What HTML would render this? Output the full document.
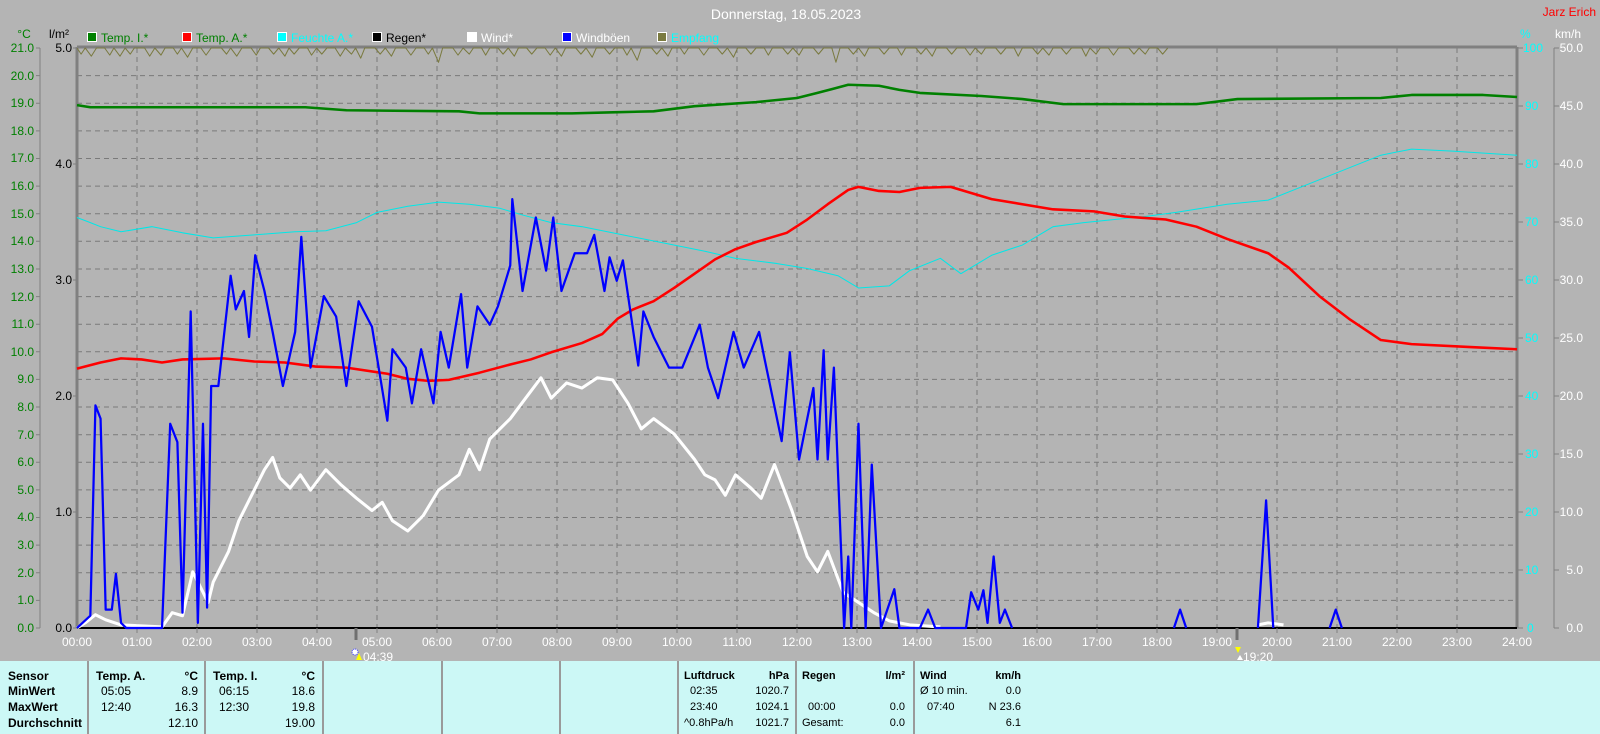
<!DOCTYPE html>
<html><head><meta charset="utf-8"><style>
html,body{margin:0;padding:0;width:1600px;height:734px;overflow:hidden;background:#b4b4b4;font-family:"Liberation Sans",sans-serif}
svg{position:absolute;left:0;top:0}
#tbl{position:absolute;left:0;top:661px;width:1600px;height:73px;background:#ccf8f6;font-size:12px;color:#000}
.sep{position:absolute;top:0;width:2px;height:73px;background:#9a9a9a}
.t{position:absolute;white-space:nowrap;line-height:12px}
.b{font-weight:bold}
.r{text-align:right}
</style></head><body>
<svg width="1600" height="734" xmlns="http://www.w3.org/2000/svg" font-family="Liberation Sans, sans-serif" font-size="12">
<path stroke="#7a7a7a" stroke-width="1" stroke-dasharray="5,4" fill="none" d="M77 75.6H1517M77 103.2H1517M77 130.9H1517M77 158.5H1517M77 186.1H1517M77 213.7H1517M77 241.3H1517M77 269H1517M77 296.6H1517M77 324.2H1517M77 351.8H1517M77 379.4H1517M77 407H1517M77 434.7H1517M77 462.3H1517M77 489.9H1517M77 517.5H1517M77 545.1H1517M77 572.8H1517M77 600.4H1517
M137 48V628M197 48V628M257 48V628M317 48V628M377 48V628M437 48V628M497 48V628M557 48V628M617 48V628M677 48V628M737 48V628M797 48V628M857 48V628M917 48V628M977 48V628M1037 48V628M1097 48V628M1157 48V628M1217 48V628M1277 48V628M1337 48V628M1397 48V628M1457 48V628"/>
<path stroke="#808080" stroke-width="3" fill="none" d="M77 47H1517M77 47V628M1517 47V628"/>
<path stroke="#808080" stroke-width="1" fill="none" d="M40 48V628M1554 48V628"/>
<path stroke="#000" stroke-width="2" d="M77 628H1517"/>
<path stroke="#808080" stroke-width="1" d="M36 48h4M36 75.6h4M36 103.2h4M36 130.9h4M36 158.5h4M36 186.1h4M36 213.7h4M36 241.3h4M36 269h4M36 296.6h4M36 324.2h4M36 351.8h4M36 379.4h4M36 407h4M36 434.7h4M36 462.3h4M36 489.9h4M36 517.5h4M36 545.1h4M36 572.8h4M36 600.4h4M36 628h4
M73 48h4M73 164h4M73 280h4M73 396h4M73 512h4M73 628h4
M1517 48h6M1517 106h6M1517 164h6M1517 222h6M1517 280h6M1517 338h6M1517 396h6M1517 454h6M1517 512h6M1517 570h6M1517 628h6
M1554 48h5M1554 106h5M1554 164h5M1554 222h5M1554 280h5M1554 338h5M1554 396h5M1554 454h5M1554 512h5M1554 570h5M1554 628h5
M137 628v5M197 628v5M257 628v5M317 628v5M377 628v5M437 628v5M497 628v5M557 628v5M617 628v5M677 628v5M737 628v5M797 628v5M857 628v5M917 628v5M977 628v5M1037 628v5M1097 628v5M1157 628v5M1217 628v5M1277 628v5M1337 628v5M1397 628v5M1457 628v5"/>
<path stroke="#707070" stroke-width="3" d="M356 628v12M1237 628v12"/>

<g transform="matrix(1.0242,0,0,1.0211,-1.86,0)" fill="none" stroke-linejoin="round">
<path stroke="#7a7a40" stroke-width="1" d="M77 47l4 6l4-6l6 8l5-8l8 0l5 7l4-7l6 8l5-8l5 6l4-6l10 0l5 8l5-8l6 7l4-7l8 0l4 6l4-6l6 9l5-9l8 0l5 7l5-7l10 0l5 6l4-6l6 8l5-8l9 0l5 7l4-7l8 0l5 6l5-6l6 8l4-8l5 6l5-6l8 0l4 7l5-7l5 6l5-6l8 0l5 8l5-8l6 6l4-6l5 10l4-10l10 0l5 6l5-6l6 8l4-8l10 0l5 7l5-7l8 0l4 6l4-6l6 14l4-14l10 0l5 7l5-7l6 6l4-6l8 0l4 7l4-7l8 0l5 6l5-6l6 8l4-8l8 0l5 6l5-6l8 0l5 7l5-7l6 8l4-8l10 0l5 6l5-6l6 9l4-9l8 0l5 6l5-6l8 0l4 7l4-7l6 12l4-12l10 0l5 6l5-6l6 8l4-8l8 0l4 6l4-6l10 0l5 7l5-7l8 0l5 6l5-6l6 9l4-9l8 0l5 6l5-6l8 0l4 7l4-7l10 0l5 6l5-6l6 7l4-7l10 0l5 6l5-6l8 0l4 14l4-14l8 0l5 6l5-6l6 8l4-8l10 0l5 6l5-6l8 0l4 7l4-7l10 0l5 6l5-6l6 8l4-8l10 0l5 6l5-6l8 0l5 7l5-7l6 6l4-6l10 0l5 6l5-6l8 0l4 8l4-8l10 0l5 6l5-6l6 7l4-7l8 0l5 6l5-6l10 0l4 8l4-8l6 6l4-6l8 0l5 7l5-7l10 0l5 6l5-6l6 6l4-6l8 0l5 6l5-6"/>
<path stroke="#008000" stroke-width="2.5" d="M77 103L90 105L300 105L340 108L450 109L470 111L560 111L600 110L640 109L680 104L740 100L780 96L800 91L815 87L830 83L860 84L880 88L900 91L960 94L1000 97L1040 102L1170 102L1210 97L1350 96L1380 93L1450 93L1483 95"/>
<path stroke="#00e8e8" stroke-width="1" d="M77 213L90 218L100 222L120 227L150 222L180 228L210 233L250 230L290 227L320 226L350 218L370 208L400 202L430 198L460 200L490 204L510 210L540 218L570 222L610 230L650 238L690 246L720 253L760 258L790 263L820 270L840 282L870 280L890 265L920 253L940 268L970 250L1000 240L1030 222L1060 218L1090 215L1120 212L1150 208L1200 200L1240 196L1280 180L1310 168L1350 152L1380 146L1420 148L1483 152"/>
<path stroke="#ff0000" stroke-width="2.5" d="M77 361L100 355L120 351L140 352L160 355L180 352L220 351L250 354L280 355L310 359L340 360L380 366L400 371L420 373L440 372L470 365L500 357L520 352L540 345L570 336L590 327L605 312L620 303L640 295L660 282L680 268L700 254L720 244L740 237L770 228L790 215L810 200L830 186L840 183L860 187L880 188L900 184L930 183L950 189L970 195L1000 200L1030 205L1070 207L1100 212L1140 215L1170 222L1200 234L1240 248L1260 262L1290 290L1320 313L1350 333L1380 337L1440 340L1483 342"/>
<path stroke="#ffffff" stroke-width="3" d="M77 615L85 610L95 602L105 607L120 612L160 614L170 600L180 603L190 560L200 580L205 590L210 570L225 540L235 510L245 490L260 460L268 448L275 468L285 478L295 465L305 480L320 460L335 475L350 488L365 500L375 492L385 510L400 520L415 505L430 480L450 465L460 440L470 460L480 430L500 410L515 390L530 370L540 390L555 375L570 380L585 370L600 372L615 395L628 420L640 410L660 425L680 450L690 465L700 470L710 485L720 465L735 478L745 488L758 455L775 500L790 545L800 560L810 540L825 580L840 590L855 600L870 608L890 612L920 614M1230 612L1240 610L1255 612"/>
<path stroke="#0000ff" stroke-width="2.2" d="M77 615L90 603L95 397L100 410L105 597L111 597L115 562L120 610L125 615L160 615L168 415L175 433L180 600L188 305L195 610L200 415L204 595L208 378L215 378L227 270L232 303L240 285L245 330L251 250L260 285L268 325L278 378L290 325L296 232L305 360L318 290L330 310L340 378L352 295L365 320L380 412L385 342L398 360L404 395L413 342L425 395L432 325L440 360L452 288L458 360L468 300L480 318L488 300L500 260L502 195L512 285L525 213L535 265L542 213L550 285L563 248L575 248L582 230L592 285L597 252L604 275L610 255L625 358L630 305L640 330L655 360L668 360L685 318L693 360L703 390L718 325L728 360L743 325L748 350L765 432L773 345L782 450L796 380L800 450L806 343L810 450L816 360L826 615L830 545L833 615L840 415L847 615L853 455L862 615L875 577L880 615L900 615L908 597L915 615L945 615L950 580L957 597L962 578L966 610L972 545L978 610L983 597L990 615M1148 615L1154 597L1160 615M1230 615L1238 490L1245 615M1300 615L1306 597L1312 615"/>
</g>

<text x="786" y="19" fill="#fff" font-size="14" text-anchor="middle">Donnerstag, 18.05.2023</text>
<text x="1596" y="16" fill="#ff0000" font-size="12" text-anchor="end">Jarz Erich</text>
<text x="24" y="38" fill="#008000" text-anchor="middle">°C</text>
<text x="59" y="38" fill="#000" text-anchor="middle">l/m²</text>
<text x="1520" y="38" fill="#00ffff">%</text>
<text x="1555" y="38" fill="#fff">km/h</text>
<g stroke="#fff" stroke-width="1">
<rect x="87.5" y="32.5" width="9" height="9" fill="#008000"/>
<rect x="182.5" y="32.5" width="9" height="9" fill="#ff0000"/>
<rect x="277.5" y="32.5" width="9" height="9" fill="#00ffff"/>
<rect x="372.5" y="32.5" width="9" height="9" fill="#000"/>
<rect x="467.5" y="32.5" width="9" height="9" fill="#fff"/>
<rect x="562.5" y="32.5" width="9" height="9" fill="#0000ff"/>
<rect x="657.5" y="32.5" width="9" height="9" fill="#7a7a40"/>
</g>
<text x="101" y="42" fill="#008000">Temp. I.*</text>
<text x="196" y="42" fill="#008000">Temp. A.*</text>
<text x="291" y="42" fill="#00ffff">Feuchte A.*</text>
<text x="386" y="42" fill="#000">Regen*</text>
<text x="481" y="42" fill="#fff">Wind*</text>
<text x="576" y="42" fill="#fff">Windböen</text>
<text x="671" y="42" fill="#00ffff">Empfang</text>

<g fill="#008000" text-anchor="end">
<text x="34" y="52">21.0</text><text x="34" y="80">20.0</text><text x="34" y="107">19.0</text><text x="34" y="135">18.0</text><text x="34" y="162">17.0</text><text x="34" y="190">16.0</text><text x="34" y="218">15.0</text><text x="34" y="245">14.0</text><text x="34" y="273">13.0</text><text x="34" y="301">12.0</text><text x="34" y="328">11.0</text><text x="34" y="356">10.0</text><text x="34" y="383">9.0</text><text x="34" y="411">8.0</text><text x="34" y="439">7.0</text><text x="34" y="466">6.0</text><text x="34" y="494">5.0</text><text x="34" y="521">4.0</text><text x="34" y="549">3.0</text><text x="34" y="577">2.0</text><text x="34" y="604">1.0</text><text x="34" y="632">0.0</text>
</g>
<g fill="#000" text-anchor="end">
<text x="72" y="52">5.0</text><text x="72" y="168">4.0</text><text x="72" y="284">3.0</text><text x="72" y="400">2.0</text><text x="72" y="516">1.0</text><text x="72" y="632">0.0</text>
</g>
<g fill="#00ffff">
<text x="1523" y="52">100</text><text x="1525" y="110">90</text><text x="1525" y="168">80</text><text x="1525" y="226">70</text><text x="1525" y="284">60</text><text x="1525" y="342">50</text><text x="1525" y="400">40</text><text x="1525" y="458">30</text><text x="1525" y="516">20</text><text x="1525" y="574">10</text><text x="1527" y="632">0</text>
</g>
<g fill="#fff" text-anchor="end">
<text x="1583" y="52">50.0</text><text x="1583" y="110">45.0</text><text x="1583" y="168">40.0</text><text x="1583" y="226">35.0</text><text x="1583" y="284">30.0</text><text x="1583" y="342">25.0</text><text x="1583" y="400">20.0</text><text x="1583" y="458">15.0</text><text x="1583" y="516">10.0</text><text x="1583" y="574">5.0</text><text x="1583" y="632">0.0</text>
</g>
<g fill="#fff" text-anchor="middle">
<text x="77" y="646">00:00</text><text x="137" y="646">01:00</text><text x="197" y="646">02:00</text><text x="257" y="646">03:00</text><text x="317" y="646">04:00</text><text x="377" y="646">05:00</text><text x="437" y="646">06:00</text><text x="497" y="646">07:00</text><text x="557" y="646">08:00</text><text x="617" y="646">09:00</text><text x="677" y="646">10:00</text><text x="737" y="646">11:00</text><text x="797" y="646">12:00</text><text x="857" y="646">13:00</text><text x="917" y="646">14:00</text><text x="977" y="646">15:00</text><text x="1037" y="646">16:00</text><text x="1097" y="646">17:00</text><text x="1157" y="646">18:00</text><text x="1217" y="646">19:00</text><text x="1277" y="646">20:00</text><text x="1337" y="646">21:00</text><text x="1397" y="646">22:00</text><text x="1457" y="646">23:00</text><text x="1517" y="646">24:00</text>
</g>
<circle cx="355" cy="652" r="3" fill="#fff" stroke="#33f" stroke-width="1" stroke-dasharray="1,1"/>
<path d="M356 660l3-7l3 7z" fill="#ff0"/>
<text x="363" y="661" fill="#fff">04:39</text>
<path d="M1235 647l3 6l3-6z" fill="#ff0"/>
<path d="M1237 660l3-5l3 5z" fill="#fff"/>
<text x="1243" y="661" fill="#fff">19:20</text>
</svg>

<div id="tbl">
<div class="sep" style="left:87px"></div><div class="sep" style="left:204px"></div><div class="sep" style="left:322px"></div><div class="sep" style="left:441px"></div><div class="sep" style="left:559px"></div><div class="sep" style="left:677px"></div><div class="sep" style="left:795px"></div><div class="sep" style="left:913px"></div>
<div class="t b" style="left:8px;top:9px">Sensor</div>
<div class="t b" style="left:8px;top:24px">MinWert</div>
<div class="t b" style="left:8px;top:40px">MaxWert</div>
<div class="t b" style="left:8px;top:56px">Durchschnitt</div>

<div class="t b" style="left:96px;top:9px">Temp. A.</div>
<div class="t b r" style="left:150px;width:48px;top:9px">°C</div>
<div class="t" style="left:101px;top:24px">05:05</div><div class="t r" style="left:150px;width:48px;top:24px">8.9</div>
<div class="t" style="left:101px;top:40px">12:40</div><div class="t r" style="left:150px;width:48px;top:40px">16.3</div>
<div class="t r" style="left:150px;width:48px;top:56px">12.10</div>

<div class="t b" style="left:213px;top:9px">Temp. I.</div>
<div class="t b r" style="left:267px;width:48px;top:9px">°C</div>
<div class="t" style="left:219px;top:24px">06:15</div><div class="t r" style="left:267px;width:48px;top:24px">18.6</div>
<div class="t" style="left:219px;top:40px">12:30</div><div class="t r" style="left:267px;width:48px;top:40px">19.8</div>
<div class="t r" style="left:267px;width:48px;top:56px">19.00</div>

<div class="t b" style="left:684px;top:9px;font-size:11px">Luftdruck</div>
<div class="t b r" style="left:740px;width:49px;top:9px;font-size:11px">hPa</div>
<div class="t" style="left:690px;top:24px;font-size:11px">02:35</div><div class="t r" style="left:740px;width:49px;top:24px;font-size:11px">1020.7</div>
<div class="t" style="left:690px;top:40px;font-size:11px">23:40</div><div class="t r" style="left:740px;width:49px;top:40px;font-size:11px">1024.1</div>
<div class="t" style="left:684px;top:56px;font-size:11px">^0.8hPa/h</div><div class="t r" style="left:740px;width:49px;top:56px;font-size:11px">1021.7</div>

<div class="t b" style="left:802px;top:9px;font-size:11px">Regen</div>
<div class="t b r" style="left:850px;width:55px;top:9px;font-size:11px">l/m²</div>
<div class="t" style="left:808px;top:40px;font-size:11px">00:00</div><div class="t r" style="left:850px;width:55px;top:40px;font-size:11px">0.0</div>
<div class="t" style="left:802px;top:56px;font-size:11px">Gesamt:</div><div class="t r" style="left:850px;width:55px;top:56px;font-size:11px">0.0</div>

<div class="t b" style="left:920px;top:9px;font-size:11px">Wind</div>
<div class="t b r" style="left:960px;width:61px;top:9px;font-size:11px">km/h</div>
<div class="t" style="left:920px;top:24px;font-size:11px">Ø 10 min.</div><div class="t r" style="left:960px;width:61px;top:24px;font-size:11px">0.0</div>
<div class="t" style="left:927px;top:40px;font-size:11px">07:40</div><div class="t r" style="left:960px;width:61px;top:40px;font-size:11px">N 23.6</div>
<div class="t r" style="left:960px;width:61px;top:56px;font-size:11px">6.1</div>
</div>
</body></html>
